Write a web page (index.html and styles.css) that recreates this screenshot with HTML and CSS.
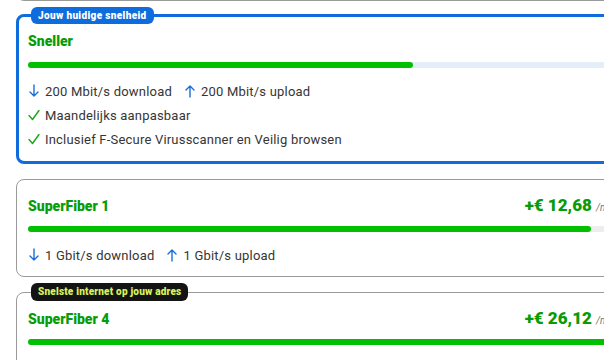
FILE: index.html
```html
<!DOCTYPE html>
<html lang="nl">
<head>
<meta charset="utf-8">
<title>Snelheid kiezen</title>
<link rel="stylesheet" href="styles.css">
</head>
<body>
<div class="list">
  <div class="card prev"></div>

  <div class="card current">
    <span class="badge badge-blue">Jouw huidige snelheid</span>
    <div class="head"><span class="name">Sneller</span></div>
    <div class="bar bar-blue"><div class="fill" style="width:64.5%"></div></div>
    <ul class="feats">
      <li class="speeds">
        <span class="sp"><svg class="ic" viewBox="0 0 12 14"><path d="M6 1v11M2 8l4 4 4-4"/></svg>200 Mbit/s download</span>
        <span class="sp"><svg class="ic" viewBox="0 0 12 14"><path d="M6 13V2M2 6l4-4 4 4"/></svg>200 Mbit/s upload</span>
      </li>
      <li><svg class="ic chk" viewBox="0 0 12 14"><path d="M1 7.5l3.5 4L11 2.5"/></svg>Maandelijks aanpasbaar</li>
      <li><svg class="ic chk" viewBox="0 0 12 14"><path d="M1 7.5l3.5 4L11 2.5"/></svg>Inclusief F-Secure Virusscanner en Veilig browsen</li>
    </ul>
  </div>

  <div class="card">
    <div class="head"><span class="name">SuperFiber 1</span><span class="price">+€ 12,68 <small>/maand</small></span></div>
    <div class="bar"><div class="fill" style="width:94%"></div></div>
    <ul class="feats">
      <li class="speeds">
        <span class="sp"><svg class="ic" viewBox="0 0 12 14"><path d="M6 1v11M2 8l4 4 4-4"/></svg>1 Gbit/s download</span>
        <span class="sp"><svg class="ic" viewBox="0 0 12 14"><path d="M6 13V2M2 6l4-4 4 4"/></svg>1 Gbit/s upload</span>
      </li>
    </ul>
  </div>

  <div class="card">
    <span class="badge badge-black">Snelste internet op jouw adres</span>
    <div class="head"><span class="name">SuperFiber 4</span><span class="price">+€ 26,12 <small>/maand</small></span></div>
    <div class="bar"><div class="fill" style="width:100%"></div></div>
    <ul class="feats">
      <li class="speeds">
        <span class="sp"><svg class="ic" viewBox="0 0 12 14"><path d="M6 1v11M2 8l4 4 4-4"/></svg>4 Gbit/s download</span>
        <span class="sp"><svg class="ic" viewBox="0 0 12 14"><path d="M6 13V2M2 6l4-4 4 4"/></svg>4 Gbit/s upload</span>
      </li>
    </ul>
  </div>
</div>
</body>
</html>
```
FILE: styles.css
```css
* { box-sizing: border-box; }
html, body { margin: 0; padding: 0; background: #fff; }
body {
  width: 604px;
  height: 360px;
  overflow: hidden;
  font-family: Roboto, "Liberation Sans", sans-serif;
  color: #353535;
}
.list {
  width: 624px;
  margin-left: 16px;
  display: flex;
  flex-direction: column;
  gap: 15px;
}
.card {
  position: relative;
  background: #fff;
  border: 1px solid #9a9a9a;
  border-radius: 8px;
  padding: 15px 12px 9px 11px;
}
.card.prev {
  height: 40px;
  margin-top: -39px;
  margin-bottom: -2px;
  padding: 0;
}
.card.current {
  border: 3px solid #0f6cdc;
  padding: 14px 12px 10px 9px;
}
.badge {
  position: absolute;
  top: -10px;
  left: 12px;
  height: 17px;
  line-height: 17px;
  padding: 0 7px;
  border-radius: 6px;
  font-size: 10px;
  font-weight: 900;
  letter-spacing: 0.35px;
  white-space: nowrap;
}
.badge-blue { background: #0f6cdc; color: #fff; }
.badge-black { background: #141414; color: #d8f25a; left: 14px; height: 18px; line-height: 18px; letter-spacing: 0.2px; }
.head {
  display: flex;
  justify-content: space-between;
  align-items: baseline;
  height: 20px;
  line-height: 20px;
}
.name {
  font-size: 14px;
  font-weight: 900;
  color: #079c07;
}
.price {
  font-size: 17px;
  font-weight: 900;
  color: #079c07;
  margin-right: -3px;
}
.price small {
  font-size: 10px;
  font-weight: 400;
  font-style: italic;
  color: #777;
}
.bar {
  margin-top: 11px;
  height: 6px;
  border-radius: 3px;
  background: #ededed;
}
.bar-blue { background: #e3eef9; }
.fill {
  height: 6px;
  border-radius: 3px;
  background: #00c000;
}
.feats {
  list-style: none;
  margin: 11px 0 0;
  padding: 0;
  font-size: 13px;
  letter-spacing: 0.2px;
}
.feats li {
  display: flex;
  align-items: center;
  height: 24px;
  gap: 5px;
}
.feats li.speeds { gap: 12px; }
.sp { display: flex; align-items: center; gap: 5px; }
.ic {
  width: 12px;
  height: 14px;
  flex: none;
  fill: none;
  stroke: #1a6fd8;
  stroke-width: 1.4;
  stroke-linecap: round;
  stroke-linejoin: round;
}
.ic.chk { stroke: #1da31d; }
```
